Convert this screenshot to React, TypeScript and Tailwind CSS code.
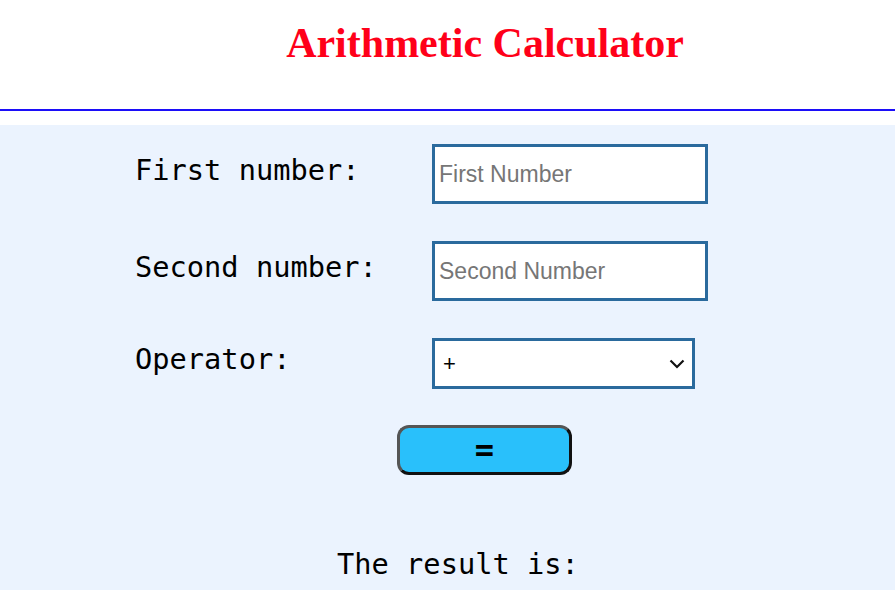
export default function App() {
  const mono = "font-['DejaVu_Sans_Mono',monospace]";

  return (
    <div className="min-h-screen bg-white">
      {/* header */}
      <header className="h-[111px] border-b-2 border-[#1c0ef8] pt-[19px] pl-[75px]">
        <h1 className="text-center font-['Liberation_Serif',serif] text-[42px] font-bold leading-[48px] text-[#ff0019]">
          Arithmetic Calculator
        </h1>
      </header>

      <main className="mt-[14px] h-[465px] bg-[#ebf3fe] pt-[19px] pl-[135px]">
        <div className="flex flex-col gap-[37px]">
          <div className="flex items-start">
            <label className={`${mono} mt-[9px] w-[297px] text-[28.7px] leading-[34px] text-black`}>
              First number:
            </label>
            <input
              type="text"
              placeholder="First Number"
              className="h-[60px] w-[276px] border-[3px] border-[#2a6a9d] bg-white px-[4px] font-['Liberation_Sans',sans-serif] text-[23px] text-black outline-none placeholder:text-[#767676]"
            />
          </div>

          <div className="flex items-start">
            <label className={`${mono} mt-[9px] w-[297px] text-[28.7px] leading-[34px] text-black`}>
              Second number:
            </label>
            <input
              type="text"
              placeholder="Second Number"
              className="h-[60px] w-[276px] border-[3px] border-[#2a6a9d] bg-white px-[4px] font-['Liberation_Sans',sans-serif] text-[23px] text-black outline-none placeholder:text-[#767676]"
            />
          </div>

          <div className="flex items-start">
            <label className={`${mono} mt-[4px] w-[297px] text-[28.7px] leading-[34px] text-black`}>
              Operator:
            </label>
            <div className="relative">
              <select className="h-[51px] w-[263px] appearance-none border-[3px] border-[#2a6a9d] bg-white pl-[8px] font-['Liberation_Sans',sans-serif] text-[22px] text-black outline-none">
                <option>+</option>
                <option>-</option>
                <option>*</option>
                <option>/</option>
              </select>
              <svg
                className="pointer-events-none absolute left-[237px] top-[21px]"
                width="16"
                height="10"
                viewBox="0 0 16 10"
                fill="none"
              >
                <path d="M1.5 1.5 L8 8 L14.5 1.5" stroke="#111" strokeWidth="2.2" />
              </svg>
            </div>
          </div>
        </div>

        <button className="ml-[262px] mt-[36px] flex h-[50px] w-[175px] items-center justify-center rounded-[12px] border-[3px] border-t-[#555] border-l-[#555] border-b-[#111] border-r-[#111] bg-[#29c0fb]">
          <span className={`${mono} text-[32px] font-bold leading-none text-black`}>=</span>
        </button>

        <p className={`${mono} mt-[72px] pl-[202px] text-[28.7px] leading-[34px] text-black`}>
          The result is:
        </p>
      </main>
    </div>
  );
}
